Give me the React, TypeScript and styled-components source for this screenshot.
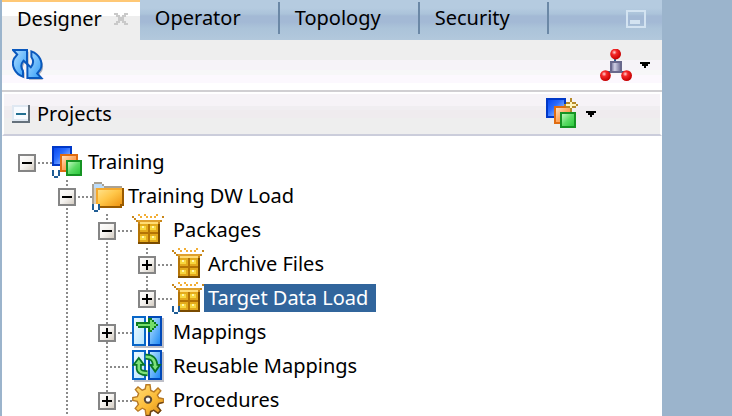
import React from "react";
import styled, { createGlobalStyle } from "styled-components";

const GlobalStyle = createGlobalStyle`
  * { box-sizing: border-box; }
  body {
    margin: 0;
    overflow: hidden;
    background: #9bb4cc;
    color: #000;
    font: 20px/28px "Noto Sans", sans-serif;
  }
  button {
    border: 0;
    padding: 0;
    background: none;
    color: inherit;
    font: inherit;
    display: flex;
    align-items: center;
  }
  svg { display: block; flex: none; }
`;

const Page = styled.main`
  height: 100vh;
  padding-left: 2px;
  padding-right: 70px;
  overflow: hidden;
`;

const Panel = styled.section`
  min-height: 100%;
  background: #fff;
`;

const TabBar = styled.nav`
  display: flex;
  height: 40px;
  background: linear-gradient(#b5cbe0 0 8px, #abc3da 14px, #a3b9d5 16px 22px, #abc3d9 28px, #b2c8dc 40px);
`;

const Tab = styled.div<{ $active?: boolean }>`
  display: flex;
  height: ${(p) => (p.$active ? 40 : 32)}px;
  margin-top: ${(p) => (p.$active ? 0 : 2)}px;
  padding: ${(p) => (p.$active ? "0 12px 4px 15px" : "0 37px 0 15px")};
  align-items: center;
  gap: 12px;
  border-top: ${(p) => (p.$active ? "2px solid #ffc875" : "0")};
  border-right: ${(p) => (p.$active ? "0" : "2px solid #6b88a6")};
  background: ${(p) => (p.$active ? "linear-gradient(#fff 0 14px, #eee 14px)" : "none")};
`;

const MinimizeButton = styled.button`
  height: 38px;
  margin-left: auto;
  margin-right: 16px;
`;

const Toolbar = styled.div`
  display: flex;
  height: 52px;
  padding: 0 12px 0 10px;
  align-items: center;
  justify-content: space-between;
  border-bottom: 2px solid #d0cfd2;
  background: linear-gradient(#eee 0 20px, #f6f3f8 20px 30px, #f7f7f8 30px 35px, #fcf8fe 35px 43px, #fff 43px);
`;

const SectionHeader = styled.header`
  display: flex;
  height: 44px;
  padding: 0 64px 0 8px;
  align-items: center;
  justify-content: space-between;
  border: 2px solid #fff;
  border-bottom-color: #cbcddb;
  background: linear-gradient(#f6f3f7 0 12px, #f0eef1 12px 16px, #efebee 16px 24px, #eee 24px);
`;

const SectionTitle = styled.h2`
  display: flex;
  align-items: center;
  gap: 7px;
  margin: 0;
  font: inherit;
`;

const MenuButton = styled.button`
  gap: 8px;
`;

const Tree = styled.ul`
  margin: 0;
  padding: 10px 0 0 16px;
  list-style: none;
`;

const Branch = styled.ul<{ $closed?: boolean }>`
  margin: 0;
  padding: 0 0 0 40px;
  list-style: none;
  background: repeating-linear-gradient(#8a8a8a 0 2px, #fff 2px 4px) 48px 0 / 2px
    ${(p) => (p.$closed ? "calc(100% - 18px)" : "100%")} no-repeat;
`;

const Row = styled.div`
  display: flex;
  height: 34px;
  align-items: center;
`;

const Joint = styled.div<{ $leaf?: boolean }>`
  width: 34px;
  height: 18px;
  background: repeating-linear-gradient(90deg, #8a8a8a 0 2px, transparent 2px 4px)
    ${(p) => (p.$leaf ? 12 : 20)}px 8px / ${(p) => (p.$leaf ? 20 : 14)}px 2px no-repeat;
`;

const IconSlot = styled.span`
  align-self: flex-start;
`;

const Label = styled.span<{ $selected?: boolean; $inset?: boolean }>`
  height: 28px;
  margin-bottom: 2px;
  padding: 0 8px 0 ${(p) => (p.$inset ? 9 : 4)}px;
  white-space: nowrap;
  background: ${(p) => (p.$selected ? "#31659c" : "none")};
  color: ${(p) => (p.$selected ? "#fff" : "#000")};
`;

type IconName = "model" | "folder" | "package" | "mapping" | "reusable" | "gear";

const Svg = ({ children, size = 32 }: { children: React.ReactNode; size?: number }) => (
  <svg width={size} height={size} viewBox={`0 0 ${size / 2} ${size / 2}`} shapeRendering="crispEdges" aria-hidden="true">
    {children}
  </svg>
);

const HiddenSvg = styled.svg`
  position: absolute;
`;

const Defs = () => (
  <HiddenSvg width="0" height="0" aria-hidden="true">
    <defs>
      <linearGradient id="blue" x2="1" y2="1"><stop stopColor="#0a48f0" /><stop offset=".4" stopColor="#2a6cff" /><stop offset="1" stopColor="#c2dcff" /></linearGradient>
      <linearGradient id="orange" x2="1" y2="1"><stop stopColor="#ffe0bd" /><stop offset=".5" stopColor="#ffa860" /><stop offset="1" stopColor="#ff8a35" /></linearGradient>
      <linearGradient id="green" x2="1" y2="1"><stop stopColor="#c0f7bd" /><stop offset=".5" stopColor="#5cdc66" /><stop offset="1" stopColor="#2cc83c" /></linearGradient>
      <linearGradient id="folder" x2="1" y2="1"><stop stopColor="#ffe795" /><stop offset=".5" stopColor="#ffc648" /><stop offset="1" stopColor="#ee9310" /></linearGradient>
      <linearGradient id="sky" x2="1" y2="1"><stop stopColor="#f2fbff" /><stop offset="1" stopColor="#b4e4ff" /></linearGradient>
      <linearGradient id="azure" x2="1" y2="1"><stop stopColor="#c4ecff" /><stop offset="1" stopColor="#1684f4" /></linearGradient>
      <linearGradient id="box" x2="1" y2="1"><stop stopColor="#fff" /><stop offset=".5" stopColor="#f5f3f0" /><stop offset="1" stopColor="#cfc7bc" /></linearGradient>
      <linearGradient id="arrow" x2="1" y2="1"><stop stopColor="#b4dfff" /><stop offset="1" stopColor="#2f9cf8" /></linearGradient>
      <linearGradient id="cog" x2="1" y2="1"><stop stopColor="#ffe07c" /><stop offset=".6" stopColor="#fbb934" /><stop offset="1" stopColor="#d88a1c" /></linearGradient>
      <linearGradient id="metal"><stop stopColor="#8585a8" /><stop offset=".35" stopColor="#cfcfe4" /><stop offset="1" stopColor="#77779c" /></linearGradient>
      <radialGradient id="ball" cx=".38" cy=".35" r=".65"><stop stopColor="#ffd4d4" /><stop offset=".35" stopColor="#f52828" /><stop offset="1" stopColor="#c50000" /></radialGradient>
    </defs>
  </HiddenSvg>
);

const Squares = () => (
  <>
    <rect width="10" height="10" fill="#0038c8" />
    <rect x="1" y="1" width="8" height="8" fill="url(#blue)" />
    <rect x="4" y="4" width="9" height="9" fill="#e06c10" />
    <rect x="5" y="5" width="7" height="7" fill="url(#orange)" />
    <rect x="7" y="7" width="8" height="8" fill="#159323" />
    <rect x="8" y="8" width="6" height="6" fill="url(#green)" />
  </>
);

const UserMark = () => (
  <>
    <rect y="12" width="4" height="4" fill="#fff" />
    <path d="M0 12h1v3H0zM3 12h1v3H3zM1 15h2v1H1z" fill="#205d95" />
  </>
);

const LoopArrow = ({ d, head }: { d: string; head: string }) => (
  <g shapeRendering="auto" fill="none">
    <path d={d} stroke="#087526" strokeWidth="3" />
    <path d={head} fill="#7ce17a" stroke="#087526" strokeWidth=".9" />
    <path d={d} stroke="#7ce17a" strokeWidth="1.3" />
  </g>
);

const refreshArrow = "M.5.5H7.5V7.5L5.8 5.8C4.4 7.4 4.4 9.4 5.5 11V13.8C1.4 12.4-.6 8 1 4.8L2.6 2.8Z";

const Mark = ({ name, user }: { name: IconName; user?: boolean }) => (
  <Svg>
    {name === "model" && <Squares />}
    {name === "folder" && (
      <>
        <path d="M0 2h1V1h4v1h1v1h9v1h1v9H0z" fill="#aaa294" />
        <path d="M1 2h4v1h1v1H1z" fill="#bcdcfa" />
        <path d="M1 4h1v8H1z" fill="#d9cdb8" />
        <path d="M2 4h14v9h-1v1H3v-1H2z" fill="#9a5b00" />
        <path d="M2 4h13v8h-1v1H2z" fill="url(#folder)" />
        <path d="M2 4h13v1H3v8H2z" fill="#f5a92c" />
      </>
    )}
    {name === "package" && (
      <>
        <path d="M3 4h11v11H3z" fill="#7a4b00" />
        <path d="M3 4h10v10H3z" fill="#b47405" />
        <path d="M4 5h4v4H4zM9 5h4v4H9zM4 10h4v4H4zM9 10h4v4H9z" fill="#e3aa1c" />
        <path d="M4 6h3v2H4zM9 6h3v2H9zM4 11h3v2H4zM9 11h3v2H9z" fill="#f7d63e" />
        <path d="M5 6h1v1H5zM10 6h1v1h-1zM5 11h1v1H5zM10 11h1v1h-1z" fill="#fff6a8" />
        <path d="M0 1h1v1h1v1h1v1h11V3h1V1h1v1h-1v2h-1v1H3V4H2V3H1V2H0z" fill="#c8871a" />
        <path d="M3 3h11v1H3z" fill="#dfa02c" />
        <path d="M4 4h9v1H4z" fill="#ffdc74" />
        <path d="M3 0h1v1h1v1H4V1H3zM6 0h1v1H6zM9 1h1v1H9zM12 0h1v1h-1v1h-1V1h1zM7 1h1v1H7z" fill="#f3ae35" />
      </>
    )}
    {(name === "mapping" || name === "reusable") && (
      <>
        <path d="M1 1h15v15H1z" fill="#bfc0c8" />
        <rect x=".5" y=".5" width="6" height="14" fill="url(#sky)" stroke="#0866c8" />
        <rect x="8.5" y=".5" width="6" height="14" fill="url(#azure)" stroke="#0049b8" />
        <path d="M7 0h1v15H7z" fill="#fff" />
      </>
    )}
    {name === "mapping" && (
      <>
        <path d="M2 3h6V1h2v1h1v1h1v1h1v1h-1v1h-1v1h-1v1H8V6H3V5H2z" fill="#0d7c22" />
        <path d="M3 4h6V2h1v1h1v1h1v1h-1v1h-1v1H9V5H3z" fill="#74dd68" />
      </>
    )}
    {name === "reusable" && (
      <>
        <LoopArrow d="M3.4 7V9.5Q3.6 11.6 7.8 11.6" head="M.8 7.4L3.4 4L6 7.4Z" />
        <LoopArrow d="M6.8 3.4Q11.5 3.2 11.6 8" head="M9.2 7.4H14L11.6 10.8Z" />
      </>
    )}
    {name === "gear" && (
      <g shapeRendering="auto">
        <path id="cog-shape" d="M7 .4h2l.4 2.8 1.6.7L13 2l1.4 1.4-1.7 2.1.7 1.4 2.4.5v1.8l-2.4.5-.7 1.5 1.7 2-1.4 1.4-2.1-1.5-1.5.7L9 15.6H7l-.4-2.8-1.5-.7L3 13.6l-1.4-1.4 1.6-2-.6-1.5L.4 8.2V6.8l2.3-.5.6-1.5-1.6-2L3 1.5l2.1 1.6 1.5-.6z" fill="url(#cog)" stroke="#b87a26" strokeWidth=".7" />
        <path d="M15.6 9.2l-2.2.6-.7 1.4 1.6 2-1.3 1.5-2.1-1.6-1.6.7L9 15.8H7" fill="none" stroke="#6b4316" strokeWidth=".7" />
        <circle cx="8" cy="7.8" r="1.6" fill="#fff" stroke="#5d4a36" />
      </g>
    )}
    {user && <UserMark />}
  </Svg>
);

const Expander = ({ open, name }: { open?: boolean; name: string }) => (
  <button aria-expanded={!!open} aria-label={name}>
    <Svg size={18}>
      <rect x=".5" y=".5" width="8" height="8" fill="url(#box)" stroke="#858585" />
      <path d={open ? "M2 4h5v1H2z" : "M2 4h2V2h1v2h2v1H5v2H4V5H2z"} fill="#000" />
    </Svg>
  </button>
);

const Caret = () => (
  <svg width="10" height="6" viewBox="0 0 5 3" shapeRendering="crispEdges" aria-hidden="true">
    <path d="M0 0h5v1H4v1H3v1H2V2H1V1H0z" />
  </svg>
);

interface TreeNode {
  name: string;
  icon: IconName;
  user?: boolean;
  inset?: boolean;
  leaf?: boolean;
  selected?: boolean;
  closed?: boolean;
  children?: TreeNode[];
}

const projects: TreeNode = {
  name: "Training", icon: "model", user: true, children: [
    { name: "Training DW Load", icon: "folder", user: true, closed: true, children: [
      { name: "Packages", icon: "package", inset: true, closed: true, children: [
        { name: "Archive Files", icon: "package" },
        { name: "Target Data Load", icon: "package", user: true, selected: true },
      ] },
      { name: "Mappings", icon: "mapping", inset: true },
      { name: "Reusable Mappings", icon: "reusable", inset: true, leaf: true },
      { name: "Procedures", icon: "gear", inset: true },
    ] },
  ],
};

const Item = ({ node }: { node: TreeNode }) => (
  <li>
    <Row>
      <Joint $leaf={node.leaf}>
        {!node.leaf && <Expander open={!!node.children} name={node.name} />}
      </Joint>
      <IconSlot><Mark name={node.icon} user={node.user} /></IconSlot>
      <Label $selected={node.selected} $inset={node.inset}>{node.name}</Label>
    </Row>
    {node.children && (
      <Branch $closed={node.closed}>
        {node.children.map((child) => <Item key={child.name} node={child} />)}
      </Branch>
    )}
  </li>
);

export default function App() {
  return (
    <Page>
      <GlobalStyle />
      <Defs />
      <Panel>
        <TabBar>
          <Tab $active>
            <button>Designer</button>
            <button aria-label="Close Designer">
              <svg width="14" height="12" viewBox="0 0 7 6" shapeRendering="crispEdges">
                <path d="M0 0h2v1h1v1h1V1h1V0h2v1H6v1H5v2h1v1h1v1H5V5H4V4H3v1H2v1H0V5h1V4h1V2H1V1H0z" fill="#c9c9c9" />
              </svg>
            </button>
          </Tab>
          <Tab><button>Operator</button></Tab>
          <Tab><button>Topology</button></Tab>
          <Tab><button>Security</button></Tab>
          <MinimizeButton aria-label="Minimize">
            <svg width="20" height="18" viewBox="0 0 10 9" shapeRendering="crispEdges">
              <path d="M.5.5h9v8h-9z" fill="none" stroke="#d3e3f1" />
              <path d="M2 5h5v2H2z" fill="#d3e3f1" />
            </svg>
          </MinimizeButton>
        </TabBar>
        <Toolbar>
          <button aria-label="Refresh">
            <Svg>
              <g shapeRendering="auto">
                <g fill="#a9adbb">
                  <path d={refreshArrow} transform="translate(.8 .9)" />
                  <path d={refreshArrow} transform="translate(.8 .9) rotate(180 7.6 7.5)" />
                </g>
                <g fill="url(#arrow)" stroke="#0a58bd">
                  <path d={refreshArrow} />
                  <path d="M14.7 14.5H7.7V7.5L9.4 9.2C10.8 7.6 10.8 5.6 9.7 4V1.2C13.8 2.6 15.8 7 14.2 10.2L12.6 12.2Z" />
                </g>
              </g>
            </Svg>
          </button>
          <MenuButton aria-label="Topology connections">
            <Svg>
              <path d="M7 4h1v2H7zM4 11h8v1h1v1h-2v-1H5v1H3v-1h1z" fill="#315f91" />
              <rect x="5" y="6" width="6" height="6" fill="#68688c" />
              <rect x="6" y="7" width="4" height="4" fill="url(#metal)" />
              <g shapeRendering="auto" fill="url(#ball)">
                <circle cx="7.8" cy="2.5" r="2.7" />
                <circle cx="2.7" cy="13.3" r="2.7" />
                <circle cx="13.3" cy="13.3" r="2.7" />
              </g>
            </Svg>
            <Caret />
          </MenuButton>
        </Toolbar>
        <SectionHeader>
          <SectionTitle>
            <button aria-label="Collapse Projects">
              <Svg size={18}>
                <path d="M0 0h9v9H0z" fill="#65717c" />
                <path d="M0 0h8v8H0z" fill="#dfe8f2" />
                <path d="M1 1h7v6H1z" fill="#f8fbff" />
                <path d="M2 4h5v1H2z" fill="#237092" />
              </Svg>
            </button>
            Projects
          </SectionTitle>
          <MenuButton aria-label="New project">
            <Svg>
              <Squares />
              <path d="M12 0h1v2h2v1h1v1h-1v1h-2v2h-1V5h-2V4H9V3h1V2h2z" fill="#b58a29" />
              <path d="M12 2h1v1h2v1h-2v1h-1V4h-2V3h2z" fill="#fff5bd" />
            </Svg>
            <Caret />
          </MenuButton>
        </SectionHeader>
        <Tree>
          <Item node={projects} />
        </Tree>
      </Panel>
    </Page>
  );
}
